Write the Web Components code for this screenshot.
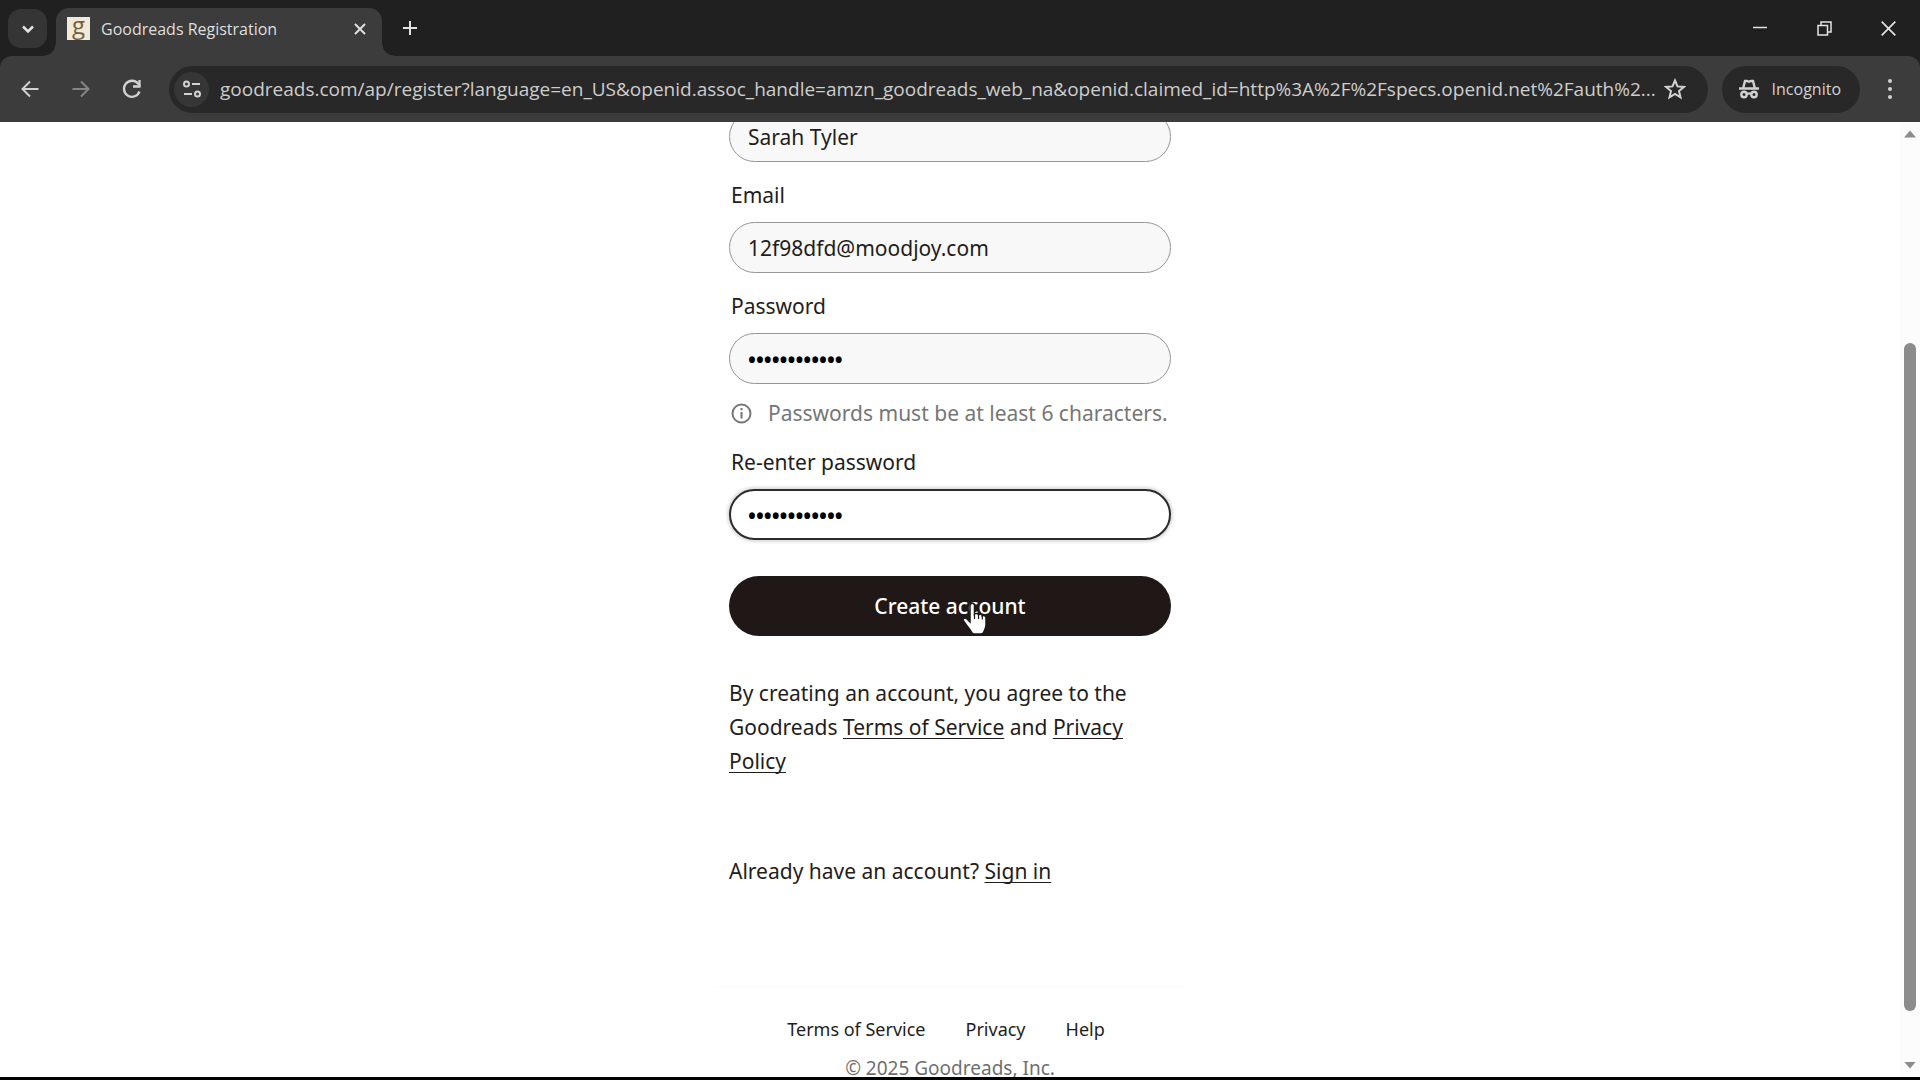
<!DOCTYPE html>
<html lang="en">
<head>
  <meta charset="utf-8">
  <title>Goodreads Registration</title>
  <style>
    html,
    body {
      height: 100%;
      margin: 0;
    }
    body {
      background: #000;
      overflow: hidden;
      font-family: "Noto Sans", sans-serif;
    }
  </style>
</head>
<body>
  <browser-window>
    <browser-tab slot="tabs">Goodreads Registration</browser-tab>
    <browser-toolbar slot="toolbar" url="goodreads.com/ap/register?language=en_US&amp;openid.assoc_handle=amzn_goodreads_web_na&amp;openid.claimed_id=http%3A%2F%2Fspecs.openid.net%2Fauth%2..."></browser-toolbar>
    <register-form>
      <form-field type="text" value="Sarah Tyler" name="customerName"></form-field>
      <form-field type="email" label="Email" value="12f98dfd@moodjoy.com" name="email"></form-field>
      <form-field type="password" label="Password" value="abcdef123456" name="password">
        <field-hint slot="hint">Passwords must be at least 6 characters.</field-hint>
      </form-field>
      <form-field type="password" label="Re-enter password" value="abcdef123456" name="passwordCheck" active></form-field>
      <submit-button slot="submit">Create account</submit-button>
    </register-form>
    <page-footer></page-footer>
  </browser-window>

  <script>
    // attach an open shadow root filled from a markup string
    function render(host, html) {
      const template = document.createElement("template");
      template.innerHTML = html;
      const root = host.attachShadow({ mode: "open" });
      root.appendChild(template.content.cloneNode(true));
      return root;
    }

    const buttonReset = `
      button {
        display: grid;
        place-items: center;
        box-sizing: border-box;
        border: 0;
        padding: 0;
        background: none;
        color: inherit;
        font: inherit;
      }
      svg {
        display: block;
        fill: none;
        stroke: currentColor;
        stroke-width: 2;
      }
    `;

    class BrowserWindow extends HTMLElement {
      constructor() {
        super();
        render(this, `
          <style>
            :host {
              display: flex;
              flex-direction: column;
              box-sizing: border-box;
              height: 100vh;
              padding-bottom: 3px;
            }
            ${buttonReset}
            .strip {
              display: flex;
              align-items: flex-end;
              flex: none;
              height: 56px;
              padding-left: 8px;
              background: #202020;
              color: #e3e3e3;
            }
            .search {
              width: 39px;
              height: 39px;
              margin: 0 9px 8px 0;
              border-radius: 13px;
              background: #353535;
            }
            .add {
              width: 40px;
              height: 40px;
              margin: 0 auto 8px 8px;
            }
            .control {
              width: 64px;
              height: 56px;
            }
            .toolbar {
              flex: none;
              background: #202020;
            }
            .view {
              display: flex;
              flex: 1;
              min-height: 0;
              background: #fff;
            }
            .page {
              flex: 1;
              overflow: hidden;
            }
          </style>
          <div class="strip">
            <button class="search" aria-label="Search tabs">
              <svg width="14" height="14" viewBox="0 0 14 14"><path d="M2 4.500l5 5 5-5" stroke-width="2.500"/></svg>
            </button>
            <slot name="tabs"></slot>
            <button class="add" aria-label="New tab">
              <svg width="14" height="14" viewBox="0 0 14 14"><path d="M7 0v14M0 7h14"/></svg>
            </button>
            <button class="control" aria-label="Minimize">
              <svg width="14" height="14" viewBox="0 0 14 14"><path d="M0 6.500h14" stroke-width="1.500"/></svg>
            </button>
            <button class="control" aria-label="Restore">
              <svg width="15" height="15" viewBox="0 0 15 15"><path d="M1 4.500h9.500V14H1zM4 4.500V1h10v10h-3.500" stroke-width="1.500"/></svg>
            </button>
            <button class="control" aria-label="Close">
              <svg width="15" height="15" viewBox="0 0 15 15"><path d="M.7.7l13.600 13.600M14.300.7L.7 14.300" stroke-width="1.700"/></svg>
            </button>
          </div>
          <div class="toolbar"><slot name="toolbar"></slot></div>
          <div class="view">
            <main class="page"><slot></slot></main>
            <scroll-bar></scroll-bar>
          </div>
        `);
      }
    }

    class BrowserTab extends HTMLElement {
      constructor() {
        super();
        render(this, `
          <style>
            :host {
              position: relative;
              display: flex;
              align-items: center;
              box-sizing: border-box;
              width: 326px;
              height: 48px;
              padding: 0 10px 7px 11px;
              border-radius: 13px 13px 0 0;
              background: #3c3c3c;
              color: #dfdfdf;
              font: 16px/24px "Open Sans", sans-serif;
            }
            /* flared feet on both sides of the tab */
            :host::before,
            :host::after {
              content: "";
              position: absolute;
              bottom: 0;
              width: 12px;
              height: 12px;
            }
            :host::before {
              left: -12px;
              background: radial-gradient(circle at 0 0, transparent 11px, #3c3c3c 12px);
            }
            :host::after {
              right: -12px;
              background: radial-gradient(circle at 100% 0, transparent 11px, #3c3c3c 12px);
            }
            ${buttonReset}
            .icon {
              width: 23px;
              height: 23px;
              margin-right: 11px;
              background: #f2ead8;
              color: #73603c;
              font: 24px/16px "Open Sans", sans-serif;
              text-align: center;
            }
            .title {
              flex: 1;
              white-space: nowrap;
            }
            button {
              width: 24px;
              height: 24px;
            }
          </style>
          <span class="icon" aria-hidden="true">g</span>
          <span class="title"><slot></slot></span>
          <button aria-label="Close tab">
            <svg width="12" height="12" viewBox="0 0 12 12"><path d="M1 1l10 10M11 1L1 11"/></svg>
          </button>
        `);
      }
    }

    class BrowserToolbar extends HTMLElement {
      constructor() {
        super();
        const root = render(this, `
          <style>
            :host {
              display: flex;
              align-items: center;
              box-sizing: border-box;
              height: 66px;
              padding: 0 12px 0 10px;
              border-radius: 12px 12px 0 0;
              background: #3c3c3c;
              color: #d2d2d2;
              font-family: "Open Sans", sans-serif;
            }
            ${buttonReset}
            .nav {
              width: 40px;
              height: 40px;
              margin-right: 11px;
            }
            .nav:disabled {
              color: #858585;
            }
            .omnibox {
              display: flex;
              align-items: center;
              box-sizing: border-box;
              flex: 1;
              min-width: 0;
              height: 47px;
              margin-left: 6px;
              padding: 0 21px 0 5px;
              border-radius: 24px;
              background: #282828;
            }
            .site {
              width: 35px;
              height: 35px;
              margin-right: 11px;
              border-radius: 50%;
              background: #363636;
            }
            input {
              flex: 1;
              min-width: 0;
              border: 0;
              padding: 0;
              outline: 0;
              background: none;
              color: #cdcdcd;
              font: 19px/28px "Open Sans", sans-serif;
            }
            .star {
              width: 24px;
              height: 36px;
              margin-left: 4px;
            }
            .incognito {
              display: flex;
              align-items: center;
              gap: 13px;
              height: 47px;
              margin: 0 12px 0 14px;
              padding: 0 19px 0 17px;
              border-radius: 24px;
              background: #282828;
              font-size: 16px;
            }
            .menu {
              width: 36px;
              height: 40px;
            }
          </style>
          <button class="nav" aria-label="Back">
            <svg width="18" height="18" viewBox="0 0 18 18"><path d="M17.500 9H2M9 1.500L1.500 9 9 16.500"/></svg>
          </button>
          <button class="nav" aria-label="Forward" disabled>
            <svg width="18" height="18" viewBox="0 0 18 18"><path d="M.5 9H16M9 1.500L16.500 9 9 16.500"/></svg>
          </button>
          <button class="nav" aria-label="Reload">
            <svg width="20" height="20" viewBox="0 0 20 20"><g stroke-width="2.300"><path d="M17.500 12.500A8 8 0 1 1 16 4.500l2 2.500"/><path d="M17.500 1v6.500H11"/></g></svg>
          </button>
          <div class="omnibox">
            <button class="site" aria-label="View site information">
              <svg width="18" height="18" viewBox="0 0 18 18"><circle cx="3.500" cy="4" r="2.500"/><path d="M9 4h8M1 14h8"/><circle cx="14.500" cy="14" r="2.500"/></svg>
            </button>
            <input type="text" aria-label="Address and search bar" spellcheck="false">
            <button class="star" aria-label="Bookmark this tab">
              <svg width="22" height="22" viewBox="0 0 22 22"><path d="M11 2.500l2.500 5.900 6.400.500-4.900 4.200 1.500 6.200L11 16l-5.500 3.300L7 13.100 2.100 8.900l6.400-.500z"/></svg>
            </button>
          </div>
          <button class="incognito">
            <svg width="20" height="20" viewBox="0 0 20 20"><g stroke-width="2.400"><path d="M0 9.500h20M4.200 9L6 2h2l2 .8 2-.8h2l1.800 7"/><circle cx="5" cy="15.500" r="2.700"/><circle cx="15" cy="15.500" r="2.700"/><path d="M8 15q2-1.200 4 0"/></g></svg>
            <span>Incognito</span>
          </button>
          <button class="menu" aria-label="Menu">
            <svg width="6" height="22" viewBox="0 0 6 22"><g fill="currentColor" stroke="none"><circle cx="3" cy="3" r="2"/><circle cx="3" cy="11" r="2"/><circle cx="3" cy="19" r="2"/></g></svg>
          </button>
        `);
        root.querySelector("input").value = this.getAttribute("url");
      }
    }

    class ScrollBar extends HTMLElement {
      constructor() {
        super();
        render(this, `
          <style>
            :host {
              display: grid;
              grid-template-rows: 24px 197fr 668fr 42fr 24px;
              justify-items: center;
              align-items: center;
              width: 20px;
              background: #fcfcfc;
            }
            .arrow {
              width: 12px;
              height: 7px;
              background: #8b8b8b;
            }
            .up {
              clip-path: polygon(50% 0, 100% 100%, 0 100%);
            }
            .down {
              grid-row: 5;
              clip-path: polygon(0 0, 100% 0, 50% 100%);
            }
            .thumb {
              grid-row: 3;
              align-self: stretch;
              width: 12px;
              border-radius: 6px;
              background: #8b8b8b;
            }
          </style>
          <span class="arrow up"></span>
          <span class="thumb"></span>
          <span class="arrow down"></span>
        `);
      }
    }

    class RegisterForm extends HTMLElement {
      constructor() {
        super();
        render(this, `
          <style>
            :host {
              display: block;
              width: 442px;
              margin: -11px auto 0;
              color: #221d1b;
              font-size: 21px;
              line-height: 34px;
            }
            .fields {
              display: flex;
              flex-direction: column;
              gap: 19px;
              margin-bottom: 36px;
            }
            p {
              margin: 40px 0 0;
            }
            .signin {
              margin-top: 76px;
            }
            a {
              color: inherit;
              text-underline-offset: 3px;
              text-decoration-thickness: 1px;
              text-decoration-skip-ink: none;
            }
          </style>
          <div class="fields"><slot></slot></div>
          <slot name="submit"></slot>
          <p>By creating an account, you agree to the Goodreads <a href="#terms">Terms of Service</a> and <a href="#privacy">Privacy Policy</a></p>
          <p class="signin">Already have an account? <a href="#signin">Sign in</a></p>
        `);
      }
    }

    class FormField extends HTMLElement {
      constructor() {
        super();
        const root = render(this, `
          <style>
            :host {
              display: block;
            }
            label {
              display: block;
              margin: 0 2px 13px;
              line-height: 28px;
            }
            input {
              display: block;
              box-sizing: border-box;
              width: 100%;
              height: 51px;
              padding: 0 18px;
              border: 1px solid #969696;
              border-radius: 26px;
              outline: 0;
              background: #f8f8f8;
              color: #221d1b;
              font: 21px "Noto Sans", sans-serif;
            }
            input[type="password"] {
              padding-top: 3px;
              color: #000;
              font-weight: 700;
            }
            :host([active]) input {
              border: 2px solid #2e2a28;
              background: #fff;
              box-shadow: 0 0 3px 2px #dcdcdc;
              padding: 3px 17px 0;
            }
          </style>
          <label for="control"></label>
          <input id="control">
          <slot name="hint"></slot>
        `);
        const label = root.querySelector("label");
        const input = root.querySelector("input");
        input.type = this.getAttribute("type");
        input.name = this.getAttribute("name");
        input.value = this.getAttribute("value");
        if (this.hasAttribute("label")) {
          label.textContent = this.getAttribute("label");
        } else {
          // its caption is scrolled out of view
          label.remove();
          input.setAttribute("aria-label", "Name");
        }
      }
    }

    class FieldHint extends HTMLElement {
      constructor() {
        super();
        render(this, `
          <style>
            :host {
              display: flex;
              align-items: center;
              gap: 16px;
              margin: 13px 0 0 2px;
              color: #767676;
              line-height: 32px;
              white-space: nowrap;
            }
            svg {
              flex: none;
              fill: none;
              stroke: currentColor;
              stroke-width: 2;
            }
          </style>
          <svg width="21" height="21" viewBox="0 0 21 21"><circle cx="10.500" cy="10.500" r="9"/><path d="M10.500 9v6.500M10.500 5v2.300"/></svg>
          <span><slot></slot></span>
        `);
      }
    }

    class SubmitButton extends HTMLElement {
      constructor() {
        super();
        render(this, `
          <style>
            :host {
              display: block;
              position: relative;
            }
            button {
              display: block;
              width: 100%;
              height: 60px;
              padding: 0;
              border: 0;
              border-radius: 30px;
              background: #1f1816;
              color: #fff;
              font: 500 21px "Noto Sans", sans-serif;
            }
            /* hand pointer over the button */
            svg {
              position: absolute;
              left: 233px;
              top: 26px;
              pointer-events: none;
            }
          </style>
          <button type="submit"><slot></slot></button>
          <svg width="26" height="34" viewBox="0 0 26 34"><path d="M8 3.500c0-3 4.500-3 4.500 0V12c1-1 3.500-.8 4 .8 1.200-1 3.400-.5 3.700 1 1.500-.8 3.800 0 3.800 2.200v7c0 3-1.500 5-2.500 7.500-.5 1.500-1.500 1.500-3 1.500h-6c-1.500 0-2.300-.5-3-2C7.500 26.500 4 23 1.500 19c-1.500-2.500 1.500-3.800 3.500-2l3 3z" fill="#fff" stroke="#1e1915" stroke-width="1.500"/><path d="M12.500 12v5M16.500 13v4M20.300 14v3.500" stroke="#1e1915" stroke-width="1.200"/></svg>
        `);
      }
    }

    class PageFooter extends HTMLElement {
      constructor() {
        super();
        render(this, `
          <style>
            :host {
              display: block;
              width: 470px;
              margin: 98px auto 0;
              border-top: 2px solid #fcfcfc;
              padding-top: 27px;
              color: #221d1b;
              font-size: 18px;
              line-height: 28px;
              text-align: center;
            }
            nav {
              display: flex;
              justify-content: center;
              gap: 40px;
              margin-bottom: 11px;
              padding-right: 8px;
            }
            a {
              color: inherit;
              text-decoration: none;
            }
            small {
              color: #6f6f6f;
              font-size: 19px;
            }
          </style>
          <nav>
            <a href="#terms">Terms of Service</a>
            <a href="#privacy">Privacy</a>
            <a href="#help">Help</a>
          </nav>
          <small>© 2025 Goodreads, Inc.</small>
        `);
      }
    }

    customElements.define("scroll-bar", ScrollBar);
    customElements.define("browser-window", BrowserWindow);
    customElements.define("browser-tab", BrowserTab);
    customElements.define("browser-toolbar", BrowserToolbar);
    customElements.define("register-form", RegisterForm);
    customElements.define("form-field", FormField);
    customElements.define("field-hint", FieldHint);
    customElements.define("submit-button", SubmitButton);
    customElements.define("page-footer", PageFooter);
  </script>
</body>
</html>
